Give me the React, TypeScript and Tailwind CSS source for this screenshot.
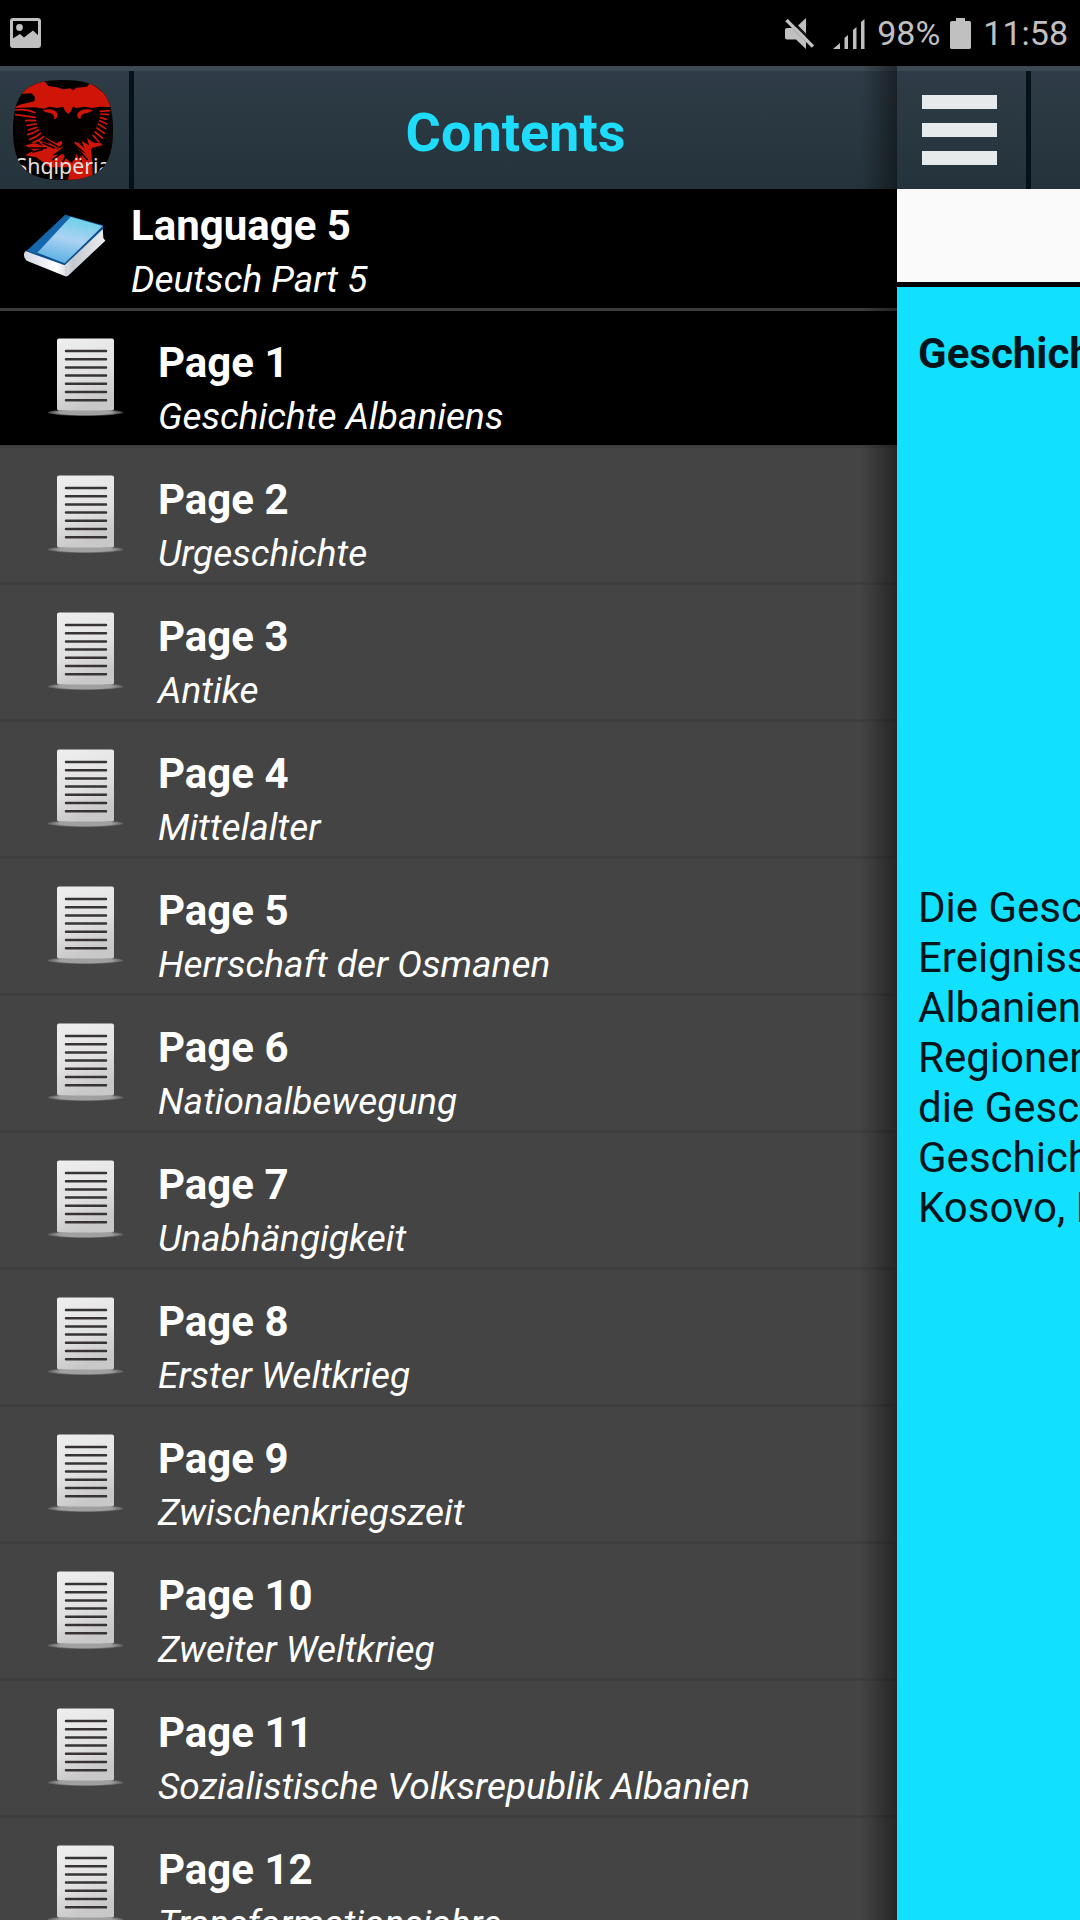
import React from "react";

const pages = [
  "Geschichte Albaniens",
  "Urgeschichte",
  "Antike",
  "Mittelalter",
  "Herrschaft der Osmanen",
  "Nationalbewegung",
  "Unabhängigkeit",
  "Erster Weltkrieg",
  "Zwischenkriegszeit",
  "Zweiter Weltkrieg",
  "Sozialistische Volksrepublik Albanien",
  "Transformationsjahre",
];

const articleLines = [
  "Die Geschichte",
  "Ereignisse",
  "Albanien",
  "Regionen",
  "die Geschichte",
  "Geschichte",
  "Kosovo, M",
];

function StatusBar() {
  return (
    <div className="flex h-[66px] shrink-0 items-center bg-black pr-[12px] pl-[10px] text-[34px] leading-[40px] text-[#c0c0c0]">
      <svg className="h-[30px] w-[31px]" viewBox="0 0 31 30" fill="none">
        <rect x="1.5" y="1.5" width="28" height="27" rx="1.5" stroke="currentColor" strokeWidth="3" />
        <circle cx="9.5" cy="9.5" r="3.4" fill="currentColor" />
        <path d="M2 21L10 16L14 19.5L23 12.5L29 18V28H2z" fill="currentColor" />
      </svg>
      <div className="ml-auto flex items-center">
        <svg className="h-[31px] w-[30px]" viewBox="0 0 30 31">
          <path d="M0 12Q0 10 2 10H7L21 24V31L11 21.500H2Q0 21.500 0 19.500zM13 7.500L21 0V15.500z" fill="currentColor" />
          <path d="M1.500 2L28 28.500" stroke="currentColor" strokeWidth="3.500" />
          <path d="M5 10H14L21 17V24L8 11z" fill="currentColor" />
          <path d="M4 1L30 27" stroke="#000000" strokeWidth="1.500" />
        </svg>
        <svg className="ml-[18px] h-[31px] w-[32px]" viewBox="0 0 32 31" fill="currentColor">
          <path d="M0 31L7 25V31zM11.500 31V20L15 17V31zM20 31V12L23.500 9V31zM28 31V4L31.500 1V31z" />
        </svg>
        <span className="ml-[12px]">98%</span>
        <svg className="ml-[10px] h-[31px] w-[21px]" viewBox="0 0 21 31" fill="currentColor">
          <path d="M6 0H15V3H19.500Q21 3 21 5V29.500Q21 31 19 31H2Q0 31 0 29.500V5Q0 3 2 3H6z" />
        </svg>
        <span className="ml-[12px]">11:58</span>
      </div>
    </div>
  );
}

function FlagIcon() {
  return (
    <svg className="size-[100px]" viewBox="0 0 300 300" role="img" aria-label="Shqipëria">
      <defs>
        <clipPath id="badge">
          <path d="M150 0C255 0 300 35 300 150S255 300 150 300S0 265 0 150S45 0 150 0z" />
        </clipPath>
      </defs>
      <g clipPath="url(#badge)">
        <rect width="300" height="300" fill="#050000" />
        <g fill="#cf1408">
          <path d="M20 42L62 0H92L106 18L132 22L150 28L172 25L180 31L190 23L222 20L232 8L300 60V82L262 80L236 84L215 80L190 84L180 80L173 95L165 102L156 92L150 80L132 84L110 80L92 86L66 82L0 84L20 74L64 64L66 52L56 40z" />
          <path d="M88 90Q122 82 133 100Q136 114 124 118Q125 101 110 99Q98 99 88 90z" />
          <path d="M240 90Q207 82 194 100Q189 114 202 117Q203 102 219 100Q232 98 240 90z" />
          <path d="M36 196L66 190L90 198L72 180L110 192L96 172L130 190L150 180L148 192L130 208L155 198L132 216L118 226L150 222L160 236L172 246L184 240L190 222L208 232L196 208L220 222L176 182L196 188L215 206L206 182L228 196L222 174L242 188L266 190L270 200L234 208L236 228L240 300H165L172 262L110 262L70 232L36 226L62 212z" />
        </g>
        <g stroke="#cf1408" strokeWidth="5" fill="none" strokeLinecap="round">
          <path d="M6 90Q40 86 66 98M8 104Q36 108 66 112M38 122Q54 120 68 122M42 136L70 132M46 150L72 142M44 164Q62 160 76 150M50 178Q70 172 82 160M60 188Q80 182 92 170" />
          <path d="M290 92L262 94M286 104L264 102M280 118L262 113M282 132L260 122M278 146L256 132M274 160L252 144M268 174L246 156M258 186L240 166" />
        </g>
        <g stroke="#050000" strokeWidth="5" fill="none" strokeLinecap="round">
          <path d="M44 204H100M60 216L88 208M90 190L124 204M100 180L134 200M120 238L156 212M222 238L200 214M205 244L184 206M240 206L268 198M150 244L162 222M176 246L174 226" />
        </g>
        <path d="M138 150L154 216L168 240L182 214L188 150z" fill="#050000" />
        <text x="150" y="281" textAnchor="middle" fontFamily="Noto Sans, sans-serif" fontSize="64" fill="#e6e0dc">
          Shqipëria
        </text>
      </g>
    </svg>
  );
}

function BookIcon() {
  return (
    <svg className="h-[68px] w-[90px] shrink-0" viewBox="0 0 270 204" aria-hidden="true">
      <defs>
        <linearGradient id="cover" x1="0.7" y1="0" x2="0.4" y2="1">
          <stop offset="0" stopColor="#66d0e8" />
          <stop offset="0.5" stopColor="#acd2f2" />
          <stop offset="1" stopColor="#5cb0e2" />
        </linearGradient>
        <linearGradient id="paper" x1="0" y1="0" x2="1" y2="0">
          <stop offset="0" stopColor="#d3d8e3" />
          <stop offset="0.4" stopColor="#ffffff" />
          <stop offset="0.6" stopColor="#c3c8cf" />
          <stop offset="1" stopColor="#eceef0" />
        </linearGradient>
      </defs>
      <path d="M18 122Q8 130 14 144L20 152L134 198Q142 202 150 192L256 92L250 84L248 50L140 150z" fill="url(#paper)" />
      <path d="M136 14L18 124L134 166L248 58L250 46z" fill="#0c4f8e" />
      <path d="M136 14L22 122L52 132L152 20z" fill="#1566aa" />
      <path d="M152 20L52 128L134 160L248 48z" fill="url(#cover)" />
      <path d="M138 168V196" stroke="#c6cdd4" strokeWidth="4" />
    </svg>
  );
}

function PageIcon() {
  return (
    <svg className="h-[80px] w-[75px] shrink-0" viewBox="0 0 75 80" aria-hidden="true">
      <defs>
        <linearGradient id="sheet" x1="0" y1="0" x2="0.3" y2="1">
          <stop offset="0" stopColor="#efefef" />
          <stop offset="0.6" stopColor="#e2e1e1" />
          <stop offset="1" stopColor="#c9c8c8" />
        </linearGradient>
        <radialGradient id="base">
          <stop offset="0.7" stopColor="#a0a0a0" />
          <stop offset="1" stopColor="#858585" stopOpacity="0.4" />
        </radialGradient>
      </defs>
      <ellipse cx="37.500" cy="74.500" rx="38" ry="3.500" fill="url(#base)" />
      <rect x="9" y="0.500" width="57" height="72" rx="2" fill="url(#sheet)" />
      <path
        d="M18 13H58M18 21.200H58M18 29.400H58M18 37.600H58M18 45.800H58M18 54H58M18 62.200H58"
        stroke="#383434"
        strokeWidth="2.500"
        strokeLinecap="round"
      />
    </svg>
  );
}

const barStyle =
  "flex h-[123px] shrink-0 border-t-[5px] border-[#3b4953] bg-linear-to-b from-[#2f3c47] to-[#24333b]";

export default function App() {
  return (
    <div className="flex h-screen flex-col overflow-hidden bg-black font-[Roboto,sans-serif]">
      <StatusBar />
      <div className="flex min-h-0 flex-1">
        <aside className="relative flex min-w-0 flex-1 flex-col overflow-hidden bg-[#444444] text-white">
          <header className={barStyle}>
            <button type="button" className="flex items-center border-r-[5px] border-[#06121a] pr-[16px] pl-[13px]">
              <FlagIcon />
            </button>
            <h1 className="flex-1 pt-[32px] text-center text-[54px] leading-[60px] font-bold text-[#1fdcfb]">
              Contents
            </h1>
          </header>
          <nav aria-label="Contents">
            <a
              href="#language-5"
              className="flex border-b-[3px] border-[#3c3c3c] bg-black pt-[9px] pb-[2px] pl-[20px]"
            >
              <span className="mt-[12px] mr-[21px] flex">
                <BookIcon />
              </span>
              <span className="flex flex-col">
                <b className="text-[42px] leading-[56px]">Language 5</b>
                <i className="text-[37px] leading-[52px]">Deutsch Part 5</i>
              </span>
            </a>
            <ul>
              {pages.map((title, i) => (
                <li key={title}>
                  <a
                    href={`#page-${i + 1}`}
                    aria-current={i === 0 ? "page" : undefined}
                    className="flex border-b-[3px] border-[#3e3e3e] pt-[24px] pb-[2px] pl-[48px] aria-[current=page]:bg-black"
                  >
                    <span className="mt-[3px] mr-[35px] flex">
                      <PageIcon />
                    </span>
                    <span className="flex flex-col whitespace-nowrap">
                      <b className="text-[42px] leading-[56px]">Page {i + 1}</b>
                      <i className="text-[37px] leading-[52px]">{title}</i>
                    </span>
                  </a>
                </li>
              ))}
            </ul>
          </nav>
          <div className="pointer-events-none absolute inset-y-0 right-0 w-[36px] bg-linear-to-r from-transparent to-black/45" />
        </aside>
        <main className="flex w-[183px] shrink-0 flex-col overflow-hidden bg-[#12e0ff] text-[#03151a]">
          <header className={barStyle}>
            <button
              type="button"
              aria-label="Menu"
              className="flex shrink-0 flex-col justify-center gap-[14px] border-r-[5px] border-[#06121a] pr-[29px] pl-[25px]"
            >
              <span className="h-[14px] w-[75px] bg-[#e6eaeb]" />
              <span className="h-[14px] w-[75px] bg-[#e6eaeb]" />
              <span className="h-[14px] w-[75px] bg-[#e6eaeb]" />
            </button>
          </header>
          <div className="h-[98px] shrink-0 border-b-[5px] border-black bg-[#fafafa]" />
          <article className="pt-[42px] pl-[21px] text-[42px] leading-[50px] whitespace-nowrap">
            <h2 className="font-bold">Geschichte</h2>
            <p className="mt-[504px]">
              {articleLines.map((line) => (
                <span key={line} className="block">
                  {line}
                </span>
              ))}
            </p>
          </article>
        </main>
      </div>
    </div>
  );
}
